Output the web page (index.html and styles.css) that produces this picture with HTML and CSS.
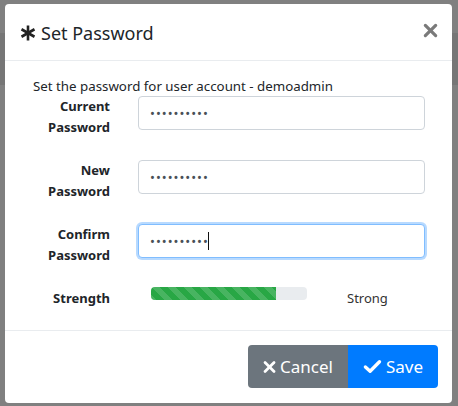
FILE: index.html
```html
<!DOCTYPE html>
<html lang="en">
<head>
<meta charset="utf-8">
<title>Set Password</title>
<link rel="stylesheet" href="styles.css">
</head>
<body>
<div class="backdrop">
  <div class="band"></div>
  <div class="modal">
    <div class="modal-header">
      <h5 class="title">
        <svg class="ast" viewBox="0 0 16 16" width="16" height="16" aria-hidden="true">
          <g stroke="#222" stroke-width="2.6" stroke-linecap="butt">
            <line x1="8" y1="0.5" x2="8" y2="15.5"/>
            <line x1="1.5" y1="4.25" x2="14.5" y2="11.75"/>
            <line x1="1.5" y1="11.75" x2="14.5" y2="4.25"/>
          </g>
        </svg>
        <span>Set Password</span>
      </h5>
      <button class="close" type="button" aria-label="Close">
        <svg viewBox="0 0 16 16" width="15" height="15" aria-hidden="true">
          <g stroke="#7a7a7a" stroke-width="3.4" stroke-linecap="round">
            <line x1="2.5" y1="2.5" x2="13.5" y2="13.5"/>
            <line x1="13.5" y1="2.5" x2="2.5" y2="13.5"/>
          </g>
        </svg>
      </button>
    </div>
    <div class="modal-body">
      <p class="intro">Set the password for user account - demoadmin</p>
      <div class="form">
        <label class="lbl" for="cur">Current<br>Password</label>
        <input class="ctl" id="cur" type="password" value="abcdefghij">
        <label class="lbl" for="new">New<br>Password</label>
        <input class="ctl" id="new" type="password" value="abcdefghij">
        <label class="lbl" for="conf">Confirm<br>Password</label>
        <div class="ctl-wrap">
          <input class="ctl focus" id="conf" type="password" value="abcdefghij">
          <span class="caret"></span>
        </div>
        <div class="lbl single">Strength</div>
        <div class="strength">
          <div class="bar"><div class="fill" style="width:80%"></div></div>
          <span class="strong">Strong</span>
        </div>
      </div>
    </div>
    <div class="modal-footer">
      <div class="btn-group">
        <button class="btn cancel" type="button">
          <svg viewBox="0 0 16 16" width="14" height="14" aria-hidden="true">
            <g stroke="#fff" stroke-width="3.4" stroke-linecap="round">
              <line x1="2.5" y1="2.5" x2="13.5" y2="13.5"/>
              <line x1="13.5" y1="2.5" x2="2.5" y2="13.5"/>
            </g>
          </svg>
          <span>Cancel</span>
        </button>
        <button class="btn save" type="button">
          <svg viewBox="0 0 20 16" width="19" height="15" aria-hidden="true">
            <polyline points="2.5,8.5 7.5,13 17.5,3" fill="none" stroke="#fff" stroke-width="3.6" stroke-linecap="round" stroke-linejoin="round"/>
          </svg>
          <span>Save</span>
        </button>
      </div>
    </div>
  </div>
</div>
</body>
</html>
```

FILE: styles.css
```css
* { box-sizing: border-box; }
html, body { margin: 0; padding: 0; }
body {
  background: #808080;
  font-family: "Noto Sans", "Open Sans", sans-serif;
  color: #212529;
  width: 458px;
  height: 406px;
  overflow: hidden;
}
.backdrop {
  position: relative;
  padding: 4px 6px 0 5px;
  height: 406px;
}
.band {
  position: absolute;
  left: 0;
  right: 0;
  top: 33px;
  height: 52px;
  background: #767676;
}
.modal {
  position: relative;
  width: 447px;
  height: 399px;
  background: #fff;
  border-radius: 4px;
  display: flex;
  flex-direction: column;
}
.modal-header {
  height: 57px;
  border-bottom: 1px solid #e9ecef;
  display: flex;
  align-items: center;
  justify-content: space-between;
  padding: 2px 14px 0 15px;
}
.title {
  margin: 0;
  display: flex;
  align-items: center;
  gap: 5px;
  font-size: 18px;
  font-weight: 400;
  color: #212529;
}
.ast { display: block; }
.close {
  border: 0;
  background: none;
  padding: 0;
  margin-top: -5px;
  display: flex;
}
.modal-body {
  flex: 1;
  padding: 15px 27px 0 28px;
}
.intro {
  margin: 0;
  font-size: 13.3px;
  line-height: 20px;
  color: #212529;
}
.form {
  display: grid;
  grid-template-columns: 77px 287px;
  column-gap: 28px;
  row-gap: 22px;
  grid-auto-rows: 42px;
}
.lbl {
  text-align: right;
  font-weight: 700;
  font-size: 13px;
  line-height: 21px;
  color: #212529;
}
.lbl.single { align-self: start; }
.ctl-wrap { position: relative; }
.ctl {
  width: 100%;
  height: 34px;
  border: 1px solid #ced4da;
  border-radius: 4px;
  padding: 0 11px;
  font-family: "Noto Sans", sans-serif;
  font-size: 13px;
  color: #495057;
  background: #fff;
  outline: none;
  letter-spacing: 1px;
}
.ctl.focus {
  border-color: #80bdff;
  box-shadow: 0 0 0 2px rgba(0, 123, 255, 0.28);
}
.caret {
  position: absolute;
  left: 70px;
  top: 8px;
  width: 1px;
  height: 18px;
  background: #111;
}
.strength {
  display: flex;
  align-items: flex-start;
}
.bar {
  margin: -1px 0 0 13px;
  width: 156px;
  height: 13px;
  background: #e9ecef;
  border-radius: 4px;
  overflow: hidden;
}
.fill {
  height: 100%;
  background-color: #28a745;
  background-image: linear-gradient(45deg, rgba(255,255,255,.15) 25%, transparent 25%, transparent 50%, rgba(255,255,255,.15) 50%, rgba(255,255,255,.15) 75%, transparent 75%, transparent);
  background-size: 16px 16px;
}
.strong {
  margin-left: 40px;
  font-size: 13px;
  line-height: 21px;
  color: #333;
}
.modal-footer {
  height: 73px;
  border-top: 1px solid #e9ecef;
  display: flex;
  justify-content: flex-end;
  align-items: flex-start;
  padding: 14px 14px 0 0;
}
.btn-group { display: flex; }
.btn {
  height: 43px;
  border: 0;
  color: #fff;
  font-family: "Noto Sans", sans-serif;
  font-size: 17px;
  display: flex;
  align-items: center;
  gap: 4px;
  padding: 0 15px;
}
.btn svg { display: block; }
.cancel {
  width: 100px;
  background: #6c757d;
  border-radius: 4px 0 0 4px;
}
.save {
  width: 90px;
  background: #007bff;
  border-radius: 0 4px 4px 0;
}
```
